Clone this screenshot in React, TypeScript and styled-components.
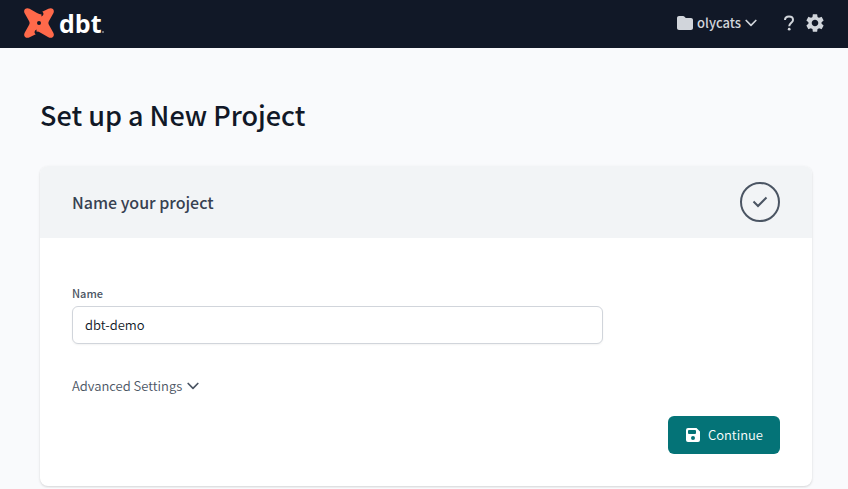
import React from "react";
import styled, { createGlobalStyle } from "styled-components";
import { FaFolder } from "react-icons/fa6";
import { MdSettings } from "react-icons/md";

const GlobalStyle = createGlobalStyle`
  *, *::before, *::after { box-sizing: border-box; }
  body {
    margin: 0;
    background: #f9fafc;
    color: #111827;
    font-family: "Noto Sans CJK SC", "Noto Sans", sans-serif;
    font-size: 13px;
    font-weight: 350;
    line-height: 20px;
  }
  button, input { font: inherit; }
  button { border: 0; padding: 0; background: none; color: inherit; cursor: pointer; }
  svg { display: block; flex: none; }
`;

const TopBar = styled.header`
  display: flex;
  align-items: center;
  justify-content: space-between;
  height: 48px;
  padding: 0 22px 2px 24px;
  background: #111827;
`;

const Brand = styled.a`
  display: flex;
  align-items: center;
  gap: 5px;
  color: #fff;
  text-decoration: none;
`;

const BrandName = styled.span`
  display: flex;
  align-items: baseline;
  font-family: "Open Sans", sans-serif;
  font-size: 25px;
  font-weight: 700;
  line-height: 46px;
`;

const Tools = styled.nav`
  display: flex;
  align-items: center;
  gap: 9px;
  color: #d1d5db;
`;

const AccountButton = styled.button`
  display: flex;
  align-items: center;
  gap: 4px;
  margin-right: 17px;
  font-weight: 500;
`;

const IconButton = styled.button`
  display: flex;
`;

const Main = styled.main`
  padding: 48px 36px 2px 40px;
`;

const PageTitle = styled.h1`
  margin: 0 0 32px;
  font-size: 27px;
  font-weight: 500;
  line-height: 38px;
`;

const Card = styled.section`
  overflow: hidden;
  border-radius: 8px;
  background: #fff;
  box-shadow: 0 1px 3px rgba(0, 0, 0, 0.1), 0 1px 2px rgba(0, 0, 0, 0.06);
`;

const CardHeader = styled.div`
  display: flex;
  align-items: center;
  justify-content: space-between;
  padding: 16px 32px;
  background: #f2f4f6;
`;

const CardTitle = styled.h2`
  margin: 0;
  color: #374151;
  font-size: 16px;
  font-weight: 500;
  line-height: 24px;
`;

const StepMark = styled.span`
  display: flex;
  align-items: center;
  justify-content: center;
  width: 40px;
  height: 40px;
  border: 2px solid #4b5563;
  border-radius: 50%;
  color: #4b5563;
`;

const Form = styled.form`
  display: flex;
  flex-direction: column;
  align-items: flex-start;
  padding: 48px 32px 32px;
`;

const Label = styled.label`
  color: #4b5563;
  font-size: 11px;
  font-weight: 500;
  line-height: 14px;
`;

const TextInput = styled.input`
  width: 75%;
  height: 38px;
  margin: 6px 0 32px;
  padding: 0 12px 2px;
  border: 1px solid #d1d5db;
  border-radius: 6px;
  background: #fff;
  color: #111827;
  box-shadow: 0 1px 2px rgba(0, 0, 0, 0.05);
`;

const Disclosure = styled.button`
  display: flex;
  align-items: center;
  gap: 5px;
  color: #4b5563;
`;

const SubmitButton = styled.button`
  display: flex;
  align-items: center;
  align-self: flex-end;
  gap: 8px;
  height: 38px;
  margin-top: 20px;
  padding: 0 17px 0 18px;
  border-radius: 6px;
  background: #047377;
  color: #fff;
`;

const DbtMark = () => (
  <svg width="30" height="30" viewBox="0 0 30 30" aria-hidden="true">
    <path
      fill="#ff694a"
      fillRule="evenodd"
      d="M.8 5.600C-.2 3.900-.1 2.100 1.100 1 2.300-.1 4.100-.1 5.600.8L13 5C14.500 5.900 16 6.400 17.600 6.400L17.300 8.600C18.900 8 19.800 6.500 19.300 4.900C19.100 4.300 18.700 3.900 18.200 3.700L24.400.8C26-.1 27.800-.1 28.900 1.100 30.100 2.200 30.100 4 29.200 5.600L25 13C24.200 14.400 24.200 15.600 25 17L29.200 24.400C30.200 26.100 30.100 27.900 28.900 29 27.700 30.100 25.900 30.100 24.400 29.200L17 25C15.500 24.100 14 23.600 12.400 23.600L12.700 21.400C11.100 22 10.200 23.500 10.700 25.100C10.900 25.700 11.300 26.100 11.800 26.300L5.600 29.200C4 30.100 2.200 30.100 1.100 28.900-.1 27.800-.1 26 .8 24.400L5 17C5.800 15.600 5.800 14.400 5 13ZM15 13A2 2 0 1 0 15 17A2 2 0 1 0 15 13Z"
    />
  </svg>
);

const BrandDot = () => (
  <svg width="2" height="2" viewBox="0 0 2 2" aria-hidden="true">
    <circle cx="1" cy="1" r="0.700" fill="currentColor" />
  </svg>
);

const Chevron = () => (
  <svg width="12" height="8" viewBox="0 0 12 8" fill="none" stroke="currentColor" strokeWidth="1.700" strokeLinecap="round" strokeLinejoin="round" aria-hidden="true">
    <path d="M1.200 1.500L6 6.300L10.800 1.500" />
  </svg>
);

const QuestionIcon = () => (
  <svg width="12" height="16" viewBox="0 0 12 16" aria-hidden="true">
    <path
      fill="none"
      stroke="currentColor"
      strokeWidth="2"
      d="M2 5C2 2.800 3.700 1.500 6 1.500S10 2.900 10 4.900C10 7.600 6.200 7.800 6.200 11.200"
    />
    <circle cx="6.200" cy="14.200" r="1.400" fill="currentColor" />
  </svg>
);

const CheckIcon = () => (
  <svg width="16" height="12" viewBox="0 0 16 12" fill="none" stroke="currentColor" strokeWidth="2" aria-hidden="true">
    <path d="M1.500 5.500L6 10L14.500 1.500" />
  </svg>
);

const SaveIcon = () => (
  <svg width="14" height="14" viewBox="0 0 14 14" aria-hidden="true">
    <path
      fill="currentColor"
      fillRule="evenodd"
      d="M2 0H10.500L14 3.500V12A2 2 0 0 1 12 14H2A2 2 0 0 1 0 12V2A2 2 0 0 1 2 0ZM3 2A1 1 0 0 0 2 3V5A1 1 0 0 0 3 6H9A1 1 0 0 0 10 5V3A1 1 0 0 0 9 2ZM7 8A2 2 0 1 0 7 12A2 2 0 1 0 7 8Z"
    />
  </svg>
);

export default function App() {
  return (
    <>
      <GlobalStyle />
      <TopBar>
        <Brand href="#" aria-label="dbt">
          <DbtMark />
          <BrandName>
            dbt
            <BrandDot />
          </BrandName>
        </Brand>
        <Tools>
          <AccountButton type="button">
            <FaFolder size={16} />
            olycats
            <Chevron />
          </AccountButton>
          <IconButton type="button" aria-label="Help">
            <QuestionIcon />
          </IconButton>
          <IconButton type="button" aria-label="Settings">
            <MdSettings size={22} />
          </IconButton>
        </Tools>
      </TopBar>
      <Main>
        <PageTitle>Set up a New Project</PageTitle>
        <Card>
          <CardHeader>
            <CardTitle>Name your project</CardTitle>
            <StepMark>
              <CheckIcon />
            </StepMark>
          </CardHeader>
          <Form onSubmit={(event) => event.preventDefault()}>
            <Label htmlFor="project-name">Name</Label>
            <TextInput id="project-name" type="text" defaultValue="dbt-demo" />
            <Disclosure type="button" aria-expanded={false}>
              Advanced Settings
              <Chevron />
            </Disclosure>
            <SubmitButton type="submit">
              <SaveIcon />
              Continue
            </SubmitButton>
          </Form>
        </Card>
      </Main>
    </>
  );
}
